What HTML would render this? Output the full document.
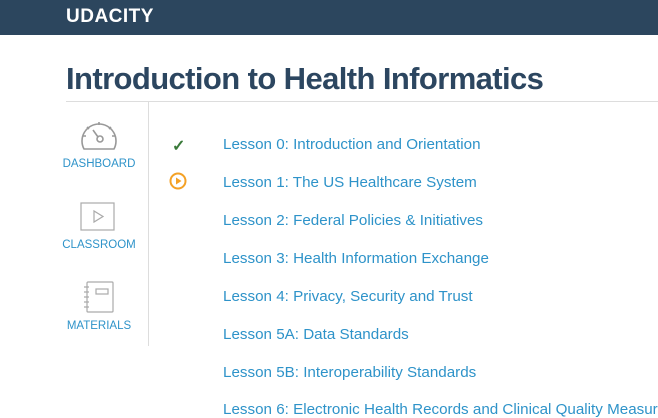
<!DOCTYPE html>
<html><head><meta charset="utf-8"><style>
*{margin:0;padding:0;box-sizing:border-box}
body{width:658px;height:404px;overflow:hidden;background:#fff;font-family:"Liberation Sans",sans-serif;position:relative}
.hdr{position:absolute;left:0;top:0;width:658px;height:35px;background:#2c465e}
.logo{position:absolute;left:66px;top:6px;color:#fff;font-weight:bold;font-size:19px;letter-spacing:0.5px}
h1{position:absolute;left:66px;top:61px;font-size:31px;color:#2c4660;font-weight:bold;letter-spacing:-0.6px;white-space:nowrap}
.hl{position:absolute;left:66px;top:101px;width:592px;height:1px;background:#ddd}
.vl{position:absolute;left:148px;top:102px;width:1px;height:244px;background:#ddd}
.nav{position:absolute;left:58px;width:82px;text-align:center;color:#2e93c9;font-size:11.5px}
.ls{position:absolute;left:223px;color:#2e93c9;font-size:15.2px;white-space:nowrap}
</style></head><body>
<div class="hdr"><div class="logo">UDACITY</div></div>
<h1>Introduction to Health Informatics</h1>
<div class="hl"></div><div class="vl"></div>
<svg style="position:absolute;left:78px;top:118px" width="42" height="34" viewBox="0 0 42 34" fill="none" stroke="#999" stroke-width="1.6">
<path d="M6 31 A17 17 0 1 1 36 31 Z" stroke-linejoin="round"/>
<path d="M21 4v3M9 9l2 2M33 9l-2 2M5 18h3M37 18h-3"/>
<circle cx="22" cy="21" r="3"/><path d="M20 19l-5-7"/>
</svg>
<div class="nav" style="top:158px">DASHBOARD</div>
<svg style="position:absolute;left:80px;top:202px" width="36" height="30" viewBox="0 0 36 30" fill="none" stroke="#aaa" stroke-width="1.2">
<rect x="1" y="1" width="33" height="27"/><path d="M14 9v11l9-5.5z"/>
</svg>
<div class="nav" style="top:239px">CLASSROOM</div>
<svg style="position:absolute;left:82px;top:281px" width="34" height="33" viewBox="0 0 34 33" fill="none" stroke="#aaa" stroke-width="1.2">
<rect x="5" y="1" width="26" height="30" rx="1"/><rect x="14" y="8" width="12" height="5"/>
<path d="M2 6h5M2 11h5M2 16h5M2 21h5M2 26h5"/>
</svg>
<div class="nav" style="top:320px">MATERIALS</div>
<div style="position:absolute;left:172px;top:136px;color:#3a7a3a;font-size:16px;font-weight:bold">✓</div>
<svg style="position:absolute;left:169px;top:172px" width="18" height="18" viewBox="0 0 18 18"><circle cx="9" cy="9" r="7.5" fill="none" stroke="#f4a125" stroke-width="2"/><path d="M7 5.5v7l5.5-3.5z" fill="#f4a125"/></svg>
<div class="ls" style="top:136px">Lesson 0: Introduction and Orientation</div>
<div class="ls" style="top:174px">Lesson 1: The US Healthcare System</div>
<div class="ls" style="top:212px">Lesson 2: Federal Policies &amp; Initiatives</div>
<div class="ls" style="top:250px">Lesson 3: Health Information Exchange</div>
<div class="ls" style="top:288px">Lesson 4: Privacy, Security and Trust</div>
<div class="ls" style="top:326px">Lesson 5A: Data Standards</div>
<div class="ls" style="top:364px">Lesson 5B: Interoperability Standards</div>
<div class="ls" style="top:401px">Lesson 6: Electronic Health Records and Clinical Quality Measures</div>
</body></html>
